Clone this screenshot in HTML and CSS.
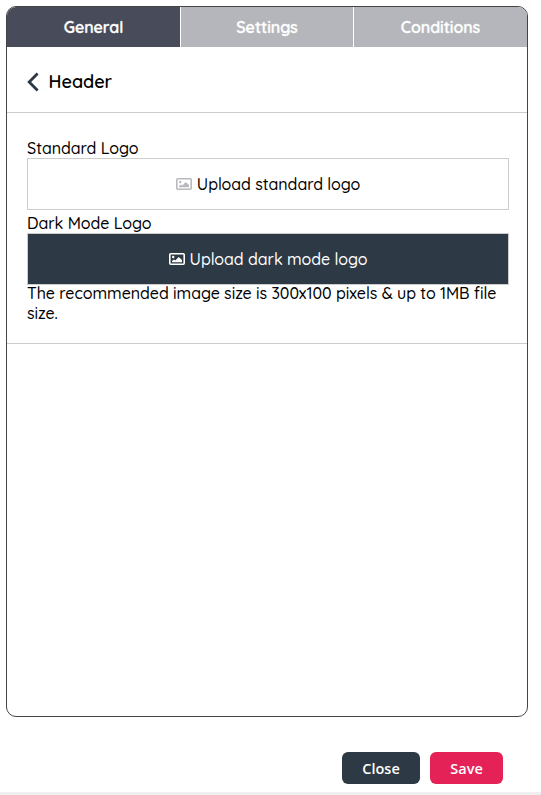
FILE: index.html
```html
<!DOCTYPE html>
<html lang="en">
<head>
<meta charset="utf-8">
<title>Header settings</title>
<link rel="stylesheet" href="styles.css">
</head>
<body>
<main class="panel">
  <nav class="tabs">
    <a class="tab tab-active">General</a>
    <a class="tab">Settings</a>
    <a class="tab">Conditions</a>
  </nav>
  <header class="heading">
    <svg class="back" width="12" height="20" viewBox="0 0 12 20"><path d="M10.6 1.6 2.2 10l8.4 8.4" fill="none" stroke="#2d3945" stroke-width="2.8"/></svg>
    <h1>Header</h1>
  </header>
  <section class="fields">
    <div class="label">Standard Logo</div>
    <div class="upload">
      <svg class="picture" width="16" height="12" viewBox="0 0 16 12"><rect x=".8" y=".8" width="14.4" height="10.4" rx="1" fill="none" stroke="currentColor" stroke-width="1.6"/><circle cx="4.2" cy="4" r="1.2" fill="currentColor"/><path d="M3 9.3V8l2-1.5L6.3 7.4 9.7 4 13 7v2.3z" fill="currentColor"/></svg>
      <span>Upload standard logo</span>
    </div>
    <div class="label label-dark">Dark Mode Logo</div>
    <div class="upload upload-dark">
      <svg class="picture" width="16" height="12" viewBox="0 0 16 12"><rect x=".8" y=".8" width="14.4" height="10.4" rx="1" fill="none" stroke="currentColor" stroke-width="1.6"/><circle cx="4.2" cy="4" r="1.2" fill="currentColor"/><path d="M3 9.3V8l2-1.5L6.3 7.4 9.7 4 13 7v2.3z" fill="currentColor"/></svg>
      <span>Upload dark mode logo</span>
    </div>
    <p class="hint">The recommended image size is 300x100 pixels &amp; up to 1MB file size.</p>
  </section>
</main>
<footer class="actions">
  <button class="button close">Close</button>
  <button class="button save">Save</button>
</footer>
</body>
</html>
```
FILE: styles.css
```css
* { box-sizing: border-box; }
body {
  margin: 0;
  height: 795px;
  padding: 6px 0 0 6px;
  overflow: hidden;
  display: flex;
  flex-direction: column;
  background: #fff;
  color: #000;
  font: 500 16px/20px Quicksand, Lato, sans-serif;
}
.panel {
  width: 522px;
  height: 711px;
  border: 1px solid #444;
  border-radius: 10px;
  overflow: hidden;
}
.tabs { display: grid; grid-template-columns: 174px 173px 173px; height: 40px; }
.tab {
  display: flex;
  align-items: center;
  justify-content: center;
  background: #b5b6bb;
  color: #fff;
  font-weight: 600;
  letter-spacing: -.05px;
  -webkit-text-stroke: .3px #fff;
  border-right: 1px solid #fff;
}
.tab:last-child { border-right: 0; }
.tab-active { background: #484b5a; }
.heading {
  display: flex;
  align-items: center;
  height: 66px;
  padding: 4px 20px 0;
  border-bottom: 1px solid #ccc;
}
.back { margin-right: 9.5px; }
h1 { margin: 0; font-size: 18px; line-height: 22px; font-weight: 600; letter-spacing: -.05px; }
.fields {
  padding: 25px 18px 20px 20px;
  height: 231px;
  border-bottom: 1px solid #ccc;
  letter-spacing: -.05px;
}
.label { height: 20px; white-space: nowrap; }
.label-dark { margin-top: 3px; }
.upload {
  display: flex;
  align-items: center;
  justify-content: center;
  gap: 5px;
  height: 52px;
  border: 1px solid #ccc;
  white-space: nowrap;
}
.upload .picture { color: #b9bac0; }
.upload-dark { background: #2d3945; color: #fff; }
.upload-dark .picture { color: #fff; }
.hint { margin: -2px 0 0; }
.actions {
  display: flex;
  flex: 1;
  justify-content: flex-end;
  gap: 10px;
  margin-left: -6px;
  padding: 35px 38px 0 0;
  border-bottom: 3px solid #efefef;
}
.button {
  height: 32px;
  padding: 1px 0 0;
  border: 0;
  border-radius: 6px;
  color: #fff;
  font: 600 14.5px/20px "Open Sans", sans-serif;
}
.close { width: 78px; background: #2d3945; }
.save { width: 73px; background: #e52257; }
```
